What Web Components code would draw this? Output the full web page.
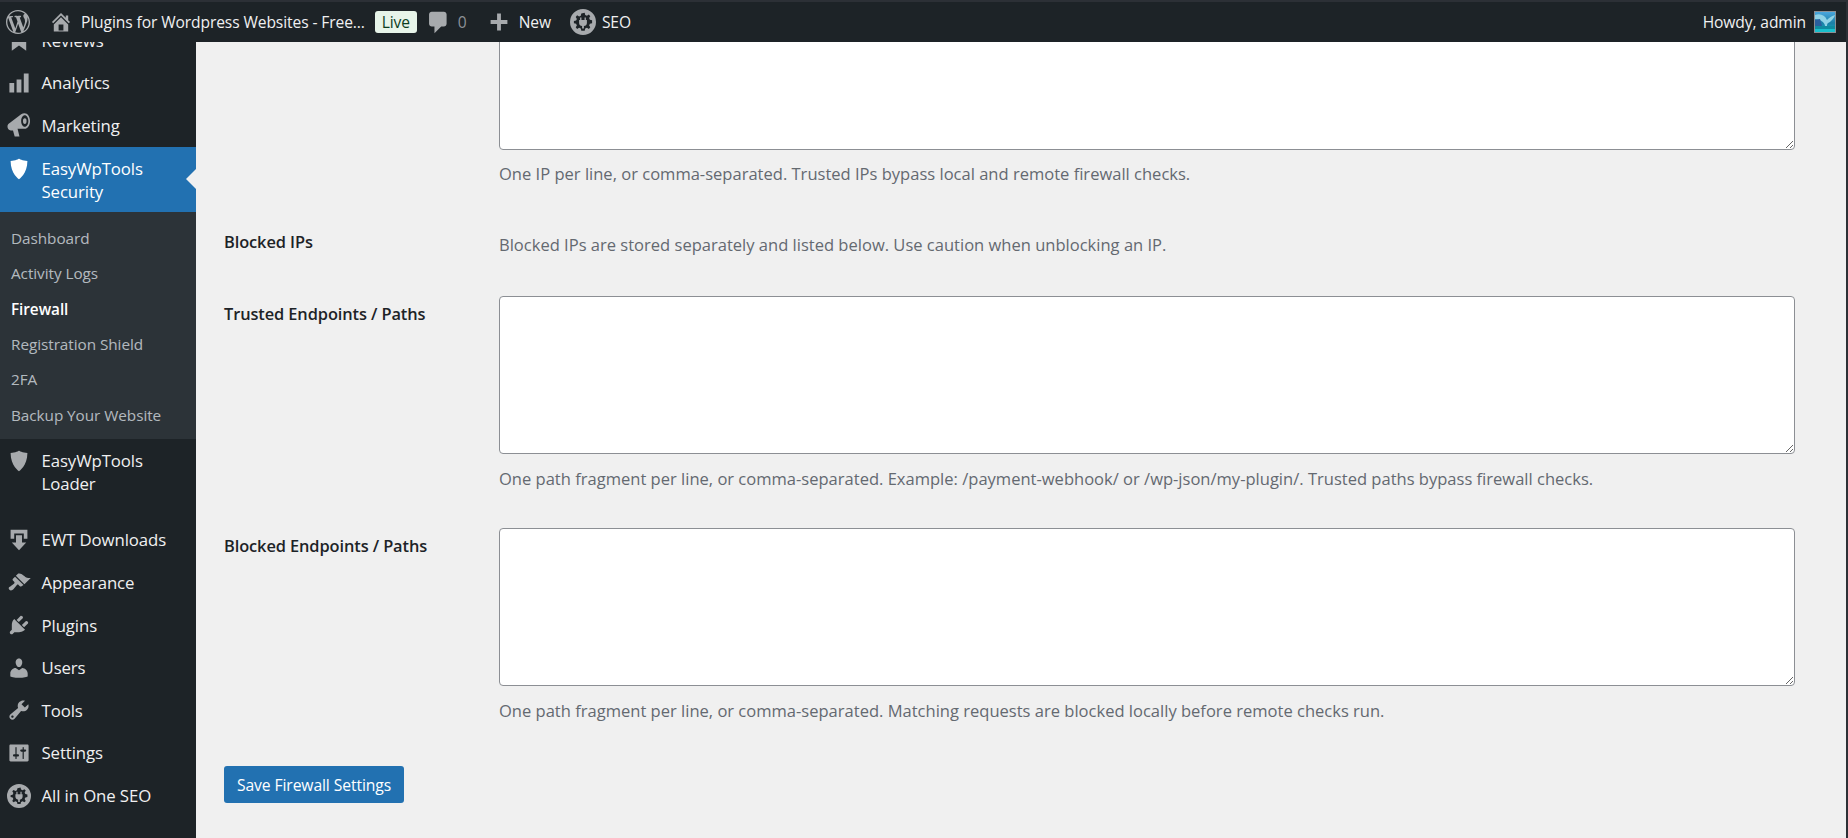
<!DOCTYPE html>
<html lang="en">
<head>
<meta charset="utf-8">
<title>Firewall</title>
<style>
  html, body { margin: 0; height: 100%; overflow: hidden; background: #f0f0f0; }
  body {
    box-sizing: border-box;
    border-right: 2px solid #2c3036;
    font-family: "Open Sans", "Noto Sans", "Liberation Sans", sans-serif;
    font-size: 15px;
    display: flex;
    align-items: stretch;
  }
</style>
</head>
<body>
  <wp-admin-bar></wp-admin-bar>
  <wp-side-menu>
    <wp-menu-item icon="reviews" label="Reviews"></wp-menu-item>
    <wp-menu-item icon="chart" label="Analytics"></wp-menu-item>
    <wp-menu-item icon="megaphone" label="Marketing"></wp-menu-item>
    <wp-menu-item icon="shield" label="EasyWpTools Security" active></wp-menu-item>
    <wp-sub-menu>
      <wp-sub-item>Dashboard</wp-sub-item>
      <wp-sub-item>Activity Logs</wp-sub-item>
      <wp-sub-item current>Firewall</wp-sub-item>
      <wp-sub-item>Registration Shield</wp-sub-item>
      <wp-sub-item>2FA</wp-sub-item>
      <wp-sub-item>Backup Your Website</wp-sub-item>
    </wp-sub-menu>
    <wp-menu-item icon="shield" label="EasyWpTools Loader" tall></wp-menu-item>
    <wp-menu-item icon="download" label="EWT Downloads"></wp-menu-item>
    <wp-menu-item icon="brush" label="Appearance"></wp-menu-item>
    <wp-menu-item icon="plug" label="Plugins"></wp-menu-item>
    <wp-menu-item icon="user" label="Users"></wp-menu-item>
    <wp-menu-item icon="wrench" label="Tools"></wp-menu-item>
    <wp-menu-item icon="sliders" label="Settings"></wp-menu-item>
    <wp-menu-item icon="aioseo" label="All in One SEO"></wp-menu-item>
  </wp-side-menu>
  <firewall-form>
    <setting-row note="One IP per line, or comma-separated. Trusted IPs bypass local and remote firewall checks." box-height="150" tight></setting-row>
    <setting-row label="Blocked IPs" note="Blocked IPs are stored separately and listed below. Use caution when unblocking an IP." text-only></setting-row>
    <setting-row label="Trusted Endpoints / Paths" note="One path fragment per line, or comma-separated. Example: /payment-webhook/ or /wp-json/my-plugin/. Trusted paths bypass firewall checks." box-height="158"></setting-row>
    <setting-row label="Blocked Endpoints / Paths" note="One path fragment per line, or comma-separated. Matching requests are blocked locally before remote checks run." box-height="158"></setting-row>
    <primary-button slot="actions">Save Firewall Settings</primary-button>
  </firewall-form>

<script>
const ICONS = {
  wordpress: '<path d="M20 10c0-5.51-4.49-10-10-10C4.48 0 0 4.49 0 10c0 5.52 4.48 10 10 10 5.51 0 10-4.48 10-10zM7.78 15.37L4.37 6.22c.55-.02 1.17-.08 1.17-.08.5-.06.44-1.13-.06-1.11 0 0-1.45.11-2.37.11-.18 0-.37 0-.58-.01C4.12 2.69 6.87 1.11 10 1.11c2.33 0 4.45.87 6.05 2.34-.68-.11-1.65.39-1.65 1.58 0 .74.45 1.36.9 2.1.35.61.55 1.36.55 2.46 0 1.49-1.4 5-1.4 5l-3.03-8.37c.54-.02.82-.17.82-.17.5-.05.44-1.25-.06-1.22 0 0-1.44.12-2.38.12-.87 0-2.33-.12-2.33-.12-.5-.03-.56 1.2-.06 1.22l.92.08 1.26 3.41zM17.41 10c.24-.64.74-1.87.43-4.25.7 1.29 1.05 2.71 1.05 4.25 0 3.29-1.73 6.24-4.4 7.78.97-2.59 1.94-5.2 2.92-7.78zM6.1 18.09C3.12 16.65 1.11 13.53 1.11 10c0-1.3.23-2.48.72-3.59C3.25 10.3 4.67 14.2 6.1 18.09zm4.03-6.63l2.58 6.98c-.86.29-1.76.45-2.71.45-.79 0-1.57-.11-2.29-.33.81-2.38 1.62-4.74 2.42-7.1z"/>',
  home: '<path d="M16 8.5l1.53 1.53-1.06 1.06L10 4.62l-6.47 6.47-1.06-1.06L10 2.5l4 4v-2h2v4zm-6-2.46l6 5.99V18H4v-5.97zM12 17v-5H8v5h4z"/>',
  comment: '<path d="M5 2h9c1.1 0 2 .9 2 2v7c0 1.1-.9 2-2 2h-2l-5 5v-5H5c-1.1 0-2-.9-2-2V4c0-1.1.9-2 2-2z"/>',
  plus: '<path d="M17 8.400v3.200h-5.400V17H8.400v-5.400H3V8.400h5.400V3h3.200v5.400z"/>',
  reviews: '<path d="M4 0h12v19l-6-4.500L4 19z"/>',
  chart: '<path d="M18 18V2h-4v16h4zm-6 0V7H8v11h4zm-6 0v-8H2v8h4z"/>',
  megaphone: '<path fill-rule="evenodd" d="M14.600.2c2.600 0 4.600 2.800 4.600 6.500s-2 6.500-4.600 6.500H8.800l1.600 6.300h-4L5 14.500H3.200C1.500 14.500.4 13 .4 11.300c0-1.500.8-2.600 2.100-3.200l9.300-7C12.600.5 13.600.2 14.600.2zm.2 1.700c-1.700 0-3 2.100-3 4.800s1.300 4.800 3 4.800 3-2.100 3-4.800-1.300-4.800-3-4.800z"/><ellipse cx="14.800" cy="6.700" rx="1.500" ry="2.400"/>',
  shield: '<path d="M10 1.500s3 1.800 7 1.800c0 10.700-7 15.200-7 15.200S3 14 3 3.300c4 0 7-1.800 7-1.800z"/>',
  download: '<path d="M3 1.500h14V9h-3V4.500H6V9H3z"/><path d="M7.500 6h5v6H16l-6 6.500L4 12h3.500z"/>',
  brush: '<path d="M14.480 11.060L7.410 3.990l1.500-1.500c.5-.56 2.300-.47 3.510.32 1.210.8 1.430 1.280 2.910 2.100 1.180.64 2.450 1.260 4.450.85zm-.71.71L6.700 4.700 4.930 6.470c-.39.39-.39 1.020 0 1.410l1.060 1.060c.39.39.39 1.030 0 1.420-.6.6-1.430 1.110-2.210 1.690-.35.26-.7.53-1.010.84C1.430 13.230.91 14.510 2 15.600c1.100 1.100 2.370.58 3.710-.78.31-.31.58-.66.84-1.010.58-.78 1.090-1.610 1.690-2.210.39-.39 1.030-.39 1.420 0l1.060 1.060c.39.39 1.020.39 1.410 0z"/>',
  plug: '<path d="M13.110 4.360L9.870 7.600 8 5.730l3.240-3.240c.35-.34 1.050-.2 1.560.32.52.51.66 1.210.31 1.550zm-8 1.770l.91-1.120 9.010 9.010-1.190.84c-.71.71-2.630 1.160-3.820 1.160H6.140L4.900 17.260c-.59.59-1.540.59-2.120 0-.59-.58-.59-1.530 0-2.120l1.240-1.240v-3.880c0-1.130.4-3.190 1.090-3.890zm7.260 3.970l3.240-3.240c.34-.35 1.040-.21 1.550.31.52.51.66 1.210.31 1.550l-3.240 3.250z"/>',
  user: '<path d="M10 9.250c-2.270 0-2.730-3.440-2.730-3.440C7 4.020 7.820 2 9.970 2c2.160 0 2.980 2.020 2.710 3.810 0 0-.41 3.440-2.680 3.440zm0 2.570L12.720 10c2.390 0 4.520 2.330 4.520 4.530v2.490s-3.650 1.130-7.240 1.130c-3.650 0-7.240-1.130-7.240-1.130v-2.490c0-2.250 1.940-4.480 4.470-4.480z"/>',
  wrench: '<path d="M16.680 9.770c-1.340 1.340-3.300 1.670-4.950.99l-5.410 6.520c-.99.99-2.590.99-3.580 0s-.99-2.590 0-3.570l6.520-5.420c-.68-1.650-.35-3.610.99-4.950 1.280-1.280 3.120-1.620 4.720-1.060l-2.890 2.890 2.820 2.820 2.860-2.870c.53 1.580.18 3.390-1.080 4.650zM3.810 16.210c.4.39 1.040.39 1.430 0 .4-.4.4-1.040 0-1.430-.39-.4-1.030-.4-1.430 0-.39.39-.39 1.030 0 1.430z"/>',
  sliders: '<path d="M18 16V4c0-.55-.45-1-1-1H3c-.55 0-1 .45-1 1v12c0 .55.45 1 1 1h14c.55 0 1-.45 1-1zM8 11h1c.55 0 1 .45 1 1s-.45 1-1 1H8v1.500c0 .28-.22.5-.5.5s-.5-.22-.5-.5V13H6c-.55 0-1-.45-1-1s.45-1 1-1h1V5.500c0-.28.22-.5.5-.5s.5.22.5.5V11zm5-2h-1c-.55 0-1-.45-1-1s.45-1 1-1h1V5.500c0-.28.22-.5.5-.5s.5.22.5.5V7h1c.55 0 1 .45 1 1s-.45 1-1 1h-1v5.500c0 .28-.22.5-.5.5s-.5-.22-.5-.5V9z"/>',
  aioseo: '<path fill-rule="evenodd" d="M10 0a10 10 0 1 1 0 20a10 10 0 0 1 0-20zM8.700 3.500l-.4 1.700-1.300.6-1.500-.9-1.100 1.200.9 1.500-.6 1.300-1.700.4v1.600l1.700.4.6 1.300-.9 1.500 1.100 1.200 1.500-.9 1.300.6.4 1.700h2.600l.4-1.700 1.300-.6 1.500.9 1.100-1.200-.9-1.500.6-1.300 1.700-.4V8.700l-1.700-.4-.6-1.300.9-1.500-1.100-1.200-1.500.9-1.300-.6-.4-1.700z"/><path d="M7.800 6.500h1v2h2.400v-2h1v2H13v2.200c0 1.300-1 2.300-2.300 2.400V15H9.300v-1.900C8 13 7 12 7 10.700V8.500h.8z"/>'
}

function iconSvg(name, size, color) {
  return `<svg xmlns="http://www.w3.org/2000/svg" width="${size}" height="${size}" viewBox="0 0 20 20" fill="${color}" aria-hidden="true">${ICONS[name]}</svg>`
}

const barTemplate = document.createElement('template')
barTemplate.innerHTML = `
  <style>
    :host {
      position: fixed;
      top: 0;
      left: 0;
      right: 0;
      z-index: 10;
      box-sizing: border-box;
      height: 42px;
      display: flex;
      align-items: center;
      background: #1d2327;
      border-top: 2px solid #2c3036;
      border-right: 2px solid #2c3036;
      color: #f0f0f1;
      font-size: 15.6px;
      letter-spacing: -.1px;
    }
    .item { display: flex; align-items: center; flex: none; white-space: nowrap; }
    svg { display: block; flex: none; }
    .logo { margin-left: 6px; }
    .home { margin-left: 19px; }
    .home span { margin-left: 8px; }
    .live {
      margin-left: 10px;
      width: 42px;
      height: 22px;
      justify-content: center;
      border-radius: 3px;
      background: #e7f4e9;
      color: #0b3d1f;
      font-weight: 500;
    }
    .comments { margin-left: 8px; color: #8c9197; }
    .comments span { margin-left: 6px; }
    .new { margin-left: 20px; }
    .new span { margin-left: 8px; }
    .seo { margin-left: 19px; }
    .seo span { margin-left: 6px; }
    .howdy { margin-left: auto; margin-right: 8px; }
    .avatar { margin-right: 10px; box-sizing: border-box; width: 22px; height: 22px; border: 1px solid #8c8f94; }
  </style>
  <div class="item logo">${iconSvg('wordpress', 24, '#a7aaad')}</div>
  <div class="item home">${iconSvg('home', 24, '#a7aaad')}<span>Plugins for Wordpress Websites - Free...</span></div>
  <div class="item live">Live</div>
  <div class="item comments">${iconSvg('comment', 27, '#a7aaad')}<span>0</span></div>
  <div class="item new">${iconSvg('plus', 24, '#a7aaad')}<span>New</span></div>
  <div class="item seo">${iconSvg('aioseo', 26, '#a7aaad')}<span>SEO</span></div>
  <div class="item howdy">Howdy, admin</div>
  <svg class="avatar" viewBox="0 0 20 20">
    <defs>
      <linearGradient id="sea" x1="0" y1="0" x2="0" y2="1">
        <stop offset="0" stop-color="#4aa6dd"/>
        <stop offset=".55" stop-color="#1b7fa6"/>
        <stop offset="1" stop-color="#16b3c4"/>
      </linearGradient>
    </defs>
    <rect width="20" height="20" fill="url(#sea)"/>
    <path d="M0 3c5-2 10 0 12 5 2-2 4-4 8-5-1 3-4 7-7 8-1 1-1 2-1 3h-2c0-3-4-7-10-7z" fill="#8fd2e6"/>
    <path d="M0 8l5-1 2 7H0z" fill="#2a5f9e"/>
    <rect y="14" width="20" height="3" fill="#0f8ba0"/>
    <rect y="17" width="20" height="3" fill="#19c0cc"/>
  </svg>
`
class WpAdminBar extends HTMLElement {
  constructor() {
    super()
    this.attachShadow({ mode: 'open' }).appendChild(barTemplate.content.cloneNode(true))
  }
}
customElements.define('wp-admin-bar', WpAdminBar)

const sideTemplate = document.createElement('template')
sideTemplate.innerHTML = `
  <style>
    :host {
      display: flex;
      flex-direction: column;
      flex: none;
      box-sizing: border-box;
      width: 196px;
      height: 838px;
      padding-top: 19px;
      overflow: hidden;
      background: #1d2327;
    }
  </style>
  <slot></slot>
`
class WpSideMenu extends HTMLElement {
  constructor() {
    super()
    this.attachShadow({ mode: 'open' }).appendChild(sideTemplate.content.cloneNode(true))
  }
}
customElements.define('wp-side-menu', WpSideMenu)

class WpMenuItem extends HTMLElement {
  constructor() {
    super()
    const active = this.hasAttribute('active')
    const shadow = this.attachShadow({ mode: 'open' })
    shadow.innerHTML = `
      <style>
        :host {
          display: flex;
          flex: none;
          position: relative;
          box-sizing: border-box;
          min-height: 42.6px;
          padding-left: 6.5px;
          align-items: center;
          color: #f0f0f1;
          font-size: 16.8px;
          line-height: 23.4px;
          letter-spacing: -.1px;
        }
        :host([active]) { background: #2271b1; color: #fff; height: 65px; align-items: flex-start; padding-top: 10px; }
        :host([tall]) { height: 80px; align-items: flex-start; padding-top: 10px; }
        svg { display: block; flex: none; margin-right: 11px; }
        .label { width: 125px; }
        .arrow {
          position: absolute;
          right: 0;
          top: 22px;
          width: 0;
          height: 0;
          border: 10px solid transparent;
          border-left-width: 0;
          border-right-color: #f0f0f0;
        }
      </style>
      ${iconSvg(this.getAttribute('icon'), 24, active ? '#fff' : '#a7aaad')}
      <span class="label">${this.getAttribute('label')}</span>
      ${active ? '<span class="arrow"></span>' : ''}
    `
  }
}
customElements.define('wp-menu-item', WpMenuItem)

const subTemplate = document.createElement('template')
subTemplate.innerHTML = `
  <style>
    :host {
      display: flex;
      flex-direction: column;
      flex: none;
      box-sizing: border-box;
      height: 227px;
      padding: 9px 0 5px;
      background: #2c3338;
    }
  </style>
  <slot></slot>
`
class WpSubMenu extends HTMLElement {
  constructor() {
    super()
    this.attachShadow({ mode: 'open' }).appendChild(subTemplate.content.cloneNode(true))
  }
}
customElements.define('wp-sub-menu', WpSubMenu)

const subItemTemplate = document.createElement('template')
subItemTemplate.innerHTML = `
  <style>
    :host {
      display: block;
      height: 35.4px;
      line-height: 35.4px;
      padding-left: 11px;
      font-size: 15.3px;
      letter-spacing: -.05px;
      color: rgba(240, 246, 252, .7);
      white-space: nowrap;
    }
    :host([current]) { color: #fff; font-weight: 600; }
  </style>
  <slot></slot>
`
class WpSubItem extends HTMLElement {
  constructor() {
    super()
    this.attachShadow({ mode: 'open' }).appendChild(subItemTemplate.content.cloneNode(true))
  }
}
customElements.define('wp-sub-item', WpSubItem)

const formTemplate = document.createElement('template')
formTemplate.innerHTML = `
  <style>
    :host {
      display: flex;
      flex-direction: column;
      flex: 1;
      min-width: 0;
      box-sizing: border-box;
      padding: 0 51px 0 28px;
      gap: 37px;
    }
    .actions { padding-top: 6px; }
  </style>
  <slot></slot>
  <div class="actions"><slot name="actions"></slot></div>
`
class FirewallForm extends HTMLElement {
  constructor() {
    super()
    this.attachShadow({ mode: 'open' }).appendChild(formTemplate.content.cloneNode(true))
  }
}
customElements.define('firewall-form', FirewallForm)

class SettingRow extends HTMLElement {
  constructor() {
    super()
    const shadow = this.attachShadow({ mode: 'open' })
    const label = this.getAttribute('label') || ''
    const height = this.getAttribute('box-height')
    shadow.innerHTML = `
      <style>
        :host {
          display: grid;
          grid-template-columns: 275px 1fr;
          font-size: 16.55px;
          line-height: 24px;
        }
        :host([text-only]) { padding: 10px 0 2px; }
        :host([text-only]) .label { margin-top: -3px; padding-top: 0; }
        :host([tight]) textarea { margin-bottom: 12px; }
        .label {
          padding-top: 6px;
          font-size: 16.4px;
          font-weight: 600;
          letter-spacing: -.1px;
          color: #1d2327;
        }
        textarea {
          display: block;
          box-sizing: border-box;
          width: 100%;
          height: ${height}px;
          margin: 0 0 13px;
          padding: 2px 6px;
          border: 1px solid #8c8f94;
          border-radius: 4px;
          background: #fff;
          resize: vertical;
          outline: none;
        }
        .note { color: #646970; }
      </style>
      <div class="label">${label}</div>
      <div>
        ${height ? '<textarea></textarea>' : ''}
        <div class="note">${this.getAttribute('note')}</div>
      </div>
    `
  }
}
customElements.define('setting-row', SettingRow)

const buttonTemplate = document.createElement('template')
buttonTemplate.innerHTML = `
  <style>
    :host {
      display: inline-flex;
      align-items: center;
      justify-content: center;
      box-sizing: border-box;
      width: 180px;
      height: 37px;
      border-radius: 3px;
      background: #2271b1;
      color: #fff;
      font-size: 15.7px;
      letter-spacing: -.1px;
      white-space: nowrap;
    }
  </style>
  <slot></slot>
`
class PrimaryButton extends HTMLElement {
  constructor() {
    super()
    this.attachShadow({ mode: 'open' }).appendChild(buttonTemplate.content.cloneNode(true))
  }
}
customElements.define('primary-button', PrimaryButton)
</script>
</body>
</html>
